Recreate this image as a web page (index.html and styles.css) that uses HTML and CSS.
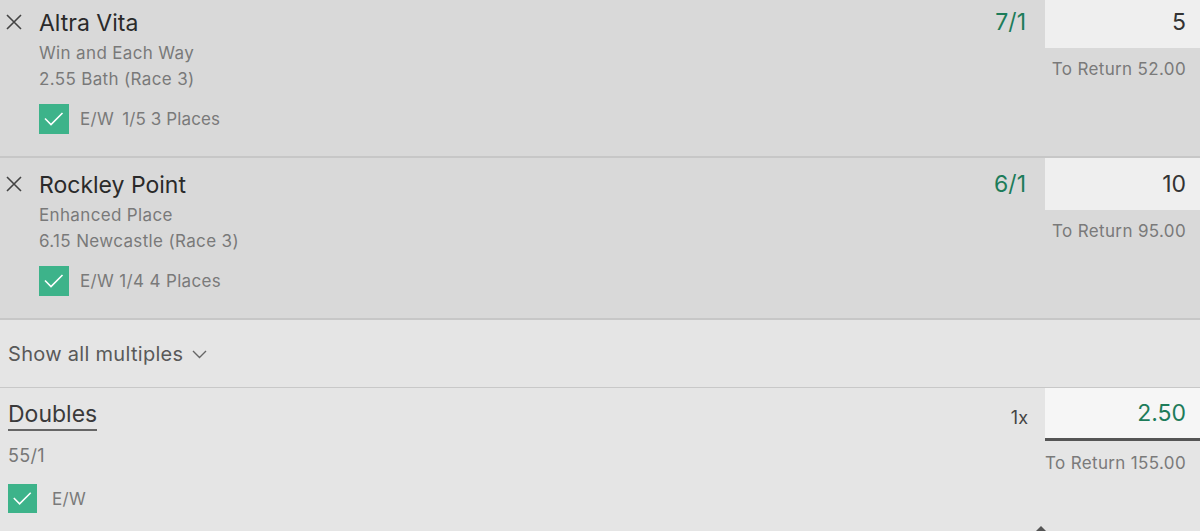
FILE: index.html
```html
<!DOCTYPE html>
<html>
<head>
<meta charset="utf-8">
<link rel="stylesheet" href="styles.css">
</head>
<body>
<div class="slip">
  <div class="bet bet-first">
    <div class="bet-main">
      <svg class="remove" width="16" height="16" viewBox="0 0 16 16"><path d="M1 1L15 15M15 1L1 15" stroke="#444" stroke-width="1.6" fill="none"/></svg>
      <div class="bet-info">
        <div class="sel">Altra Vita</div>
        <div class="sub">Win and Each Way</div>
        <div class="sub">2.55 Bath (Race 3)</div>
        <div class="ew">
          <span class="check"><svg width="30" height="30" viewBox="0 0 30 30"><path d="M6 14.5L12 20.5L23.5 9" stroke="#fff" stroke-width="1.6" fill="none"/></svg></span>
          <span class="ew-text">E/W <span class="ew-terms">1/5 3 Places</span></span>
        </div>
      </div>
    </div>
    <div class="odds">7/1</div>
    <div class="stake">
      <div class="stake-input">5</div>
      <div class="return">To Return 52.00</div>
    </div>
  </div>

  <div class="bet">
    <div class="bet-main">
      <svg class="remove" width="16" height="16" viewBox="0 0 16 16"><path d="M1 1L15 15M15 1L1 15" stroke="#444" stroke-width="1.6" fill="none"/></svg>
      <div class="bet-info">
        <div class="sel">Rockley Point</div>
        <div class="sub">Enhanced Place</div>
        <div class="sub">6.15 Newcastle (Race 3)</div>
        <div class="ew">
          <span class="check"><svg width="30" height="30" viewBox="0 0 30 30"><path d="M6 14.5L12 20.5L23.5 9" stroke="#fff" stroke-width="1.6" fill="none"/></svg></span>
          <span class="ew-text">E/W 1/4 4 Places</span>
        </div>
      </div>
    </div>
    <div class="odds">6/1</div>
    <div class="stake">
      <div class="stake-input">10</div>
      <div class="return">To Return 95.00</div>
    </div>
  </div>

  <div class="show-multiples">
    <span>Show all multiples</span>
    <svg class="chev" width="15" height="9" viewBox="0 0 15 9"><path d="M1 1L7.5 7.5L14 1" stroke="#666" stroke-width="1.4" fill="none"/></svg>
  </div>

  <div class="multiple">
    <div class="multi-main">
      <div class="multi-name">Doubles</div>
      <div class="multi-odds">55/1</div>
      <div class="ew ew-multi">
        <span class="check check-small"><svg width="29" height="29" viewBox="0 0 30 30"><path d="M6 14.5L12 20.5L23.5 9" stroke="#fff" stroke-width="1.6" fill="none"/></svg></span>
        <span class="ew-text">E/W</span>
      </div>
    </div>
    <div class="multi-count">1x</div>
    <div class="stake">
      <div class="stake-input stake-active">2.50</div>
      <div class="return return-multi">To Return 155.00</div>
    </div>
    <span class="caret"></span>
  </div>
</div>
</body>
</html>
```

FILE: styles.css
```css
html, body {
  margin: 0;
  padding: 0;
}
body {
  width: 1200px;
  height: 531px;
  overflow: hidden;
  background: #e5e5e5;
  font-family: Inter, "Open Sans", sans-serif;
  color: #2b2b2b;
}
.slip {
  display: flex;
  flex-direction: column;
}
.bet {
  display: flex;
  height: 160px;
  background: #d9d9d9;
  border-bottom: 2px solid #c7c7c7;
}
.bet-first {
  margin-top: -4px;
}
.bet-main {
  flex: 1;
  display: flex;
  align-items: flex-start;
  padding: 10px 0 0 6px;
  gap: 17px;
}
.remove {
  margin-top: 8px;
  flex: none;
}
.bet-info {
  display: flex;
  flex-direction: column;
}
.sel {
  font-size: 23px;
  line-height: 34px;
  color: #2a2a2a;
}
.sub {
  font-size: 17px;
  line-height: 26px;
  letter-spacing: 0.35px;
  color: #797979;
}
.ew {
  display: flex;
  align-items: center;
  margin-top: 12px;
  gap: 11px;
}
.check {
  width: 30px;
  height: 30px;
  background: #3db38a;
  display: flex;
}
.check-small {
  width: 29px;
  height: 29px;
}
.ew-text {
  font-size: 17px;
  letter-spacing: 0.35px;
  color: #7a7a7a;
}
.ew-terms {
  margin-left: 3px;
  letter-spacing: 0.1px;
}
.odds {
  font-size: 23px;
  line-height: 52px;
  color: #1d7c5a;
  padding-right: 19px;
}
.stake {
  width: 155px;
  display: flex;
  flex-direction: column;
  align-items: stretch;
}
.stake-input {
  height: 52px;
  line-height: 52px;
  background: #efefef;
  text-align: right;
  padding-right: 14px;
  font-size: 23px;
  color: #333;
}
.return {
  margin-top: 9px;
  line-height: 24px;
  font-size: 17px;
  letter-spacing: 0.35px;
  color: #7a7a7a;
  text-align: right;
  padding-right: 14px;
}
.show-multiples {
  height: 67px;
  display: flex;
  align-items: center;
  gap: 9px;
  padding-left: 8px;
  font-size: 20px;
  letter-spacing: 0.3px;
  color: #595959;
  border-bottom: 1px solid #c8c8c8;
}
.chev {
  margin-top: 1px;
}
.multiple {
  position: relative;
  display: flex;
  height: 143px;
  background: #e5e5e5;
}
.multi-main {
  flex: 1;
  display: flex;
  flex-direction: column;
  align-items: flex-start;
  padding: 11px 0 0 8px;
}
.multi-name {
  font-size: 23px;
  line-height: 30px;
  color: #3a3a3a;
  border-bottom: 2px solid #666;
}
.multi-odds {
  margin-top: 12px;
  font-size: 18px;
  line-height: 26px;
  letter-spacing: 0.3px;
  color: #777;
}
.ew-multi {
  margin-top: 15px;
  gap: 15px;
}
.multi-count {
  font-size: 18px;
  line-height: 60px;
  color: #444;
  padding-right: 17px;
}
.stake-active {
  height: 50px;
  line-height: 50px;
  background: #f6f6f6;
  border-bottom: 3px solid #555;
  color: #1d7c5a;
}
.return-multi {
  margin-top: 10px;
}
.caret {
  position: absolute;
  left: 1036px;
  bottom: 0;
  width: 0;
  height: 0;
  border-left: 5px solid transparent;
  border-right: 5px solid transparent;
  border-bottom: 5px solid #555;
}
```
